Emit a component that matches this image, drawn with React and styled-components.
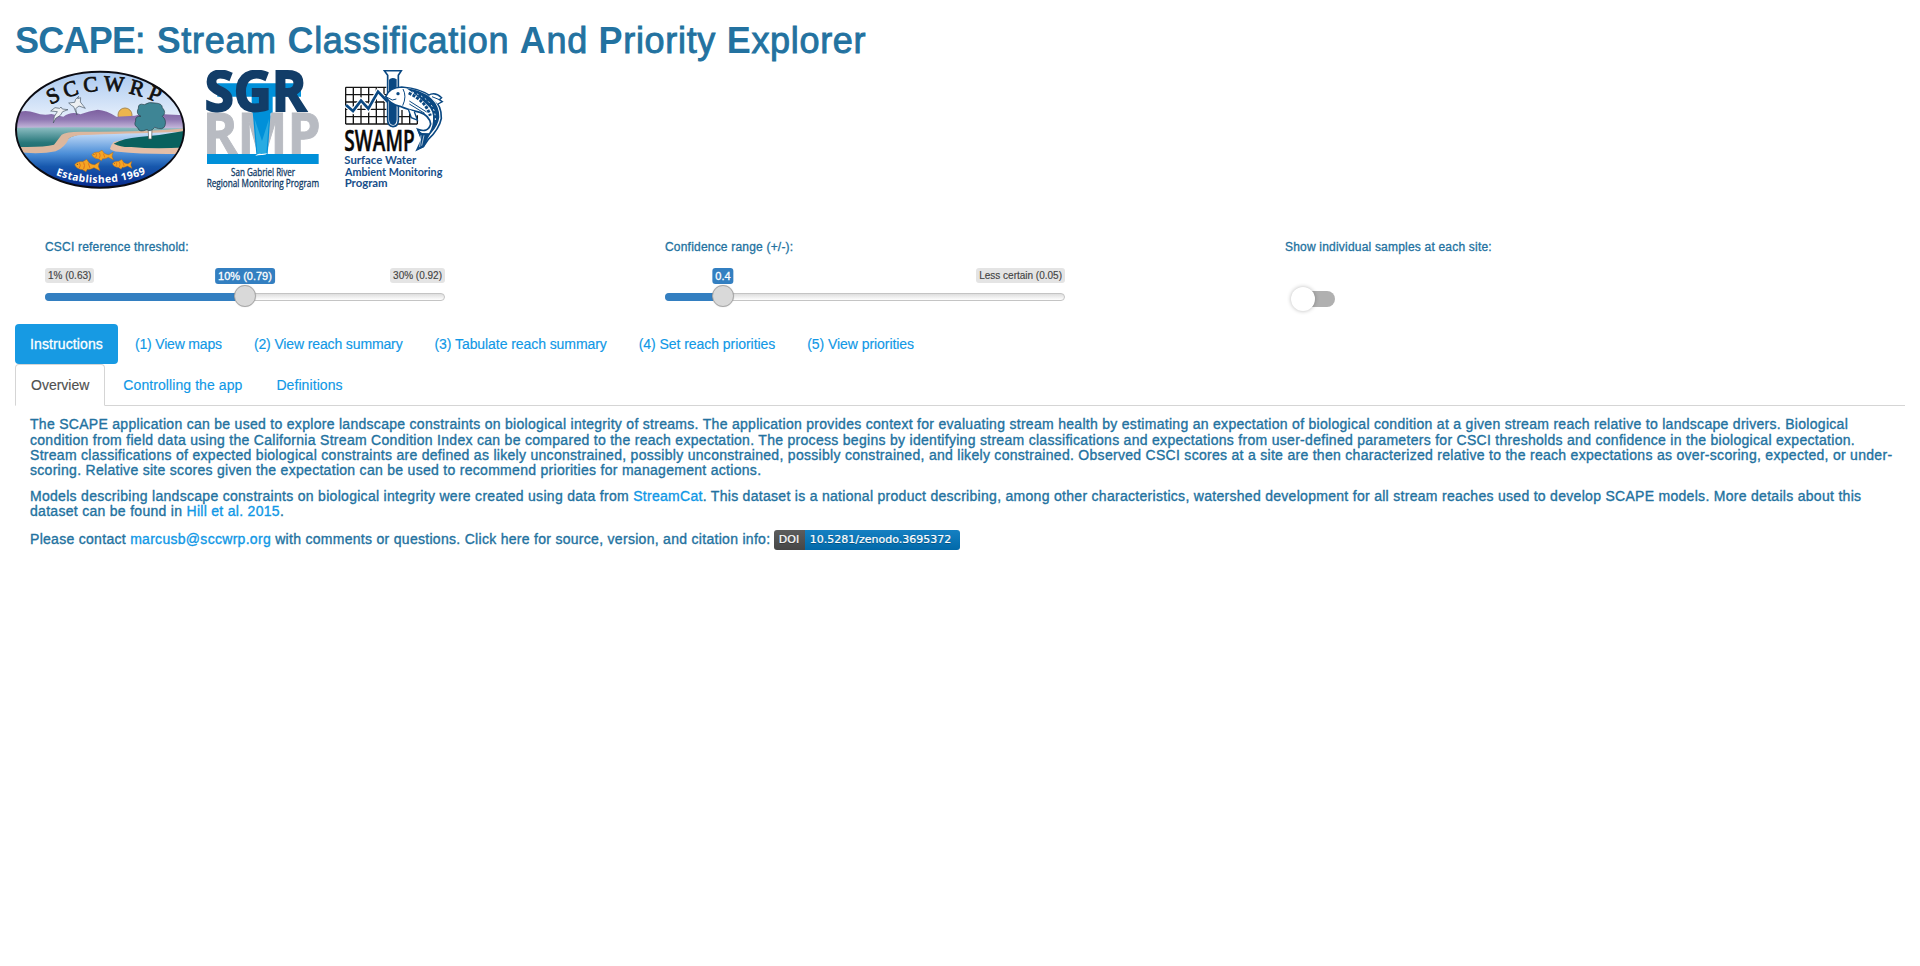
import React from "react";
import styled, { createGlobalStyle } from "styled-components";

const Global = createGlobalStyle`
  *, *::before, *::after { box-sizing: border-box; }
  body {
    margin: 0;
    background: #fff;
    color: #2372a0;
    font: 14px/20px "Liberation Sans", Arial, sans-serif;
  }
`;
const Page = styled.div`padding: 21px 15px 0;`;
const Title = styled.h1`
  margin: 0 0 9px;
  height: 40px;
  font-size: 36px;
  line-height: 40px;
  font-weight: 400;
  letter-spacing: 0.68px;
  white-space: nowrap;
  -webkit-text-stroke: 0.9px #2372a0;
  b { font-weight: 700; -webkit-text-stroke: 0; }
  b:first-child { letter-spacing: -0.75px; }
`;
const Logos = styled.div`
  display: flex;
  height: 120px;
  svg { display: block; flex: none; }
  svg + svg { margin-left: 19px; }
  svg:last-child { margin-left: 23px; }
`;
const Controls = styled.div`
  display: flex;
  padding: 48px 0 0 30px;
  height: 134px;
`;
const Control = styled.div`width: 620px;`;
const ControlLabel = styled.div`
  font-size: 12px;
  line-height: 18px;
  height: 30px;
  letter-spacing: 0.2px;
  -webkit-text-stroke: 0.3px #2372a0;
`;
const Slider = styled.div`position: relative; width: 400px; height: 40px;`;
const Bound = styled.span`
  position: absolute;
  top: 0;
  ${(p) => (p.$end ? "right: 0;" : "left: 0;")}
  padding: 0 3px;
  height: 15px;
  border-radius: 3px;
  background: #e4e4e4;
  color: #444;
  font-size: 10px;
  line-height: 15px;
  white-space: nowrap;
  -webkit-text-stroke: 0.15px #444;
`;
const Value = styled.span`
  position: absolute;
  top: 0;
  transform: translateX(-50%);
  padding: 0 3px;
  height: 16px;
  border-radius: 3px;
  background: #337fc1;
  color: #fff;
  font-size: 11px;
  line-height: 16px;
  white-space: nowrap;
  -webkit-text-stroke: 0.3px #fff;
`;
const Track = styled.div`
  position: absolute;
  top: 25px;
  width: 100%;
  height: 8px;
  border: 1px solid #c4c4c4;
  border-radius: 8px;
  background: linear-gradient(#dedede, #fff);
`;
const Fill = styled.div`
  position: absolute;
  top: 25px;
  height: 8px;
  border-radius: 8px 0 0 8px;
  background: #337fc1;
`;
const Knob = styled.div`
  position: absolute;
  top: 17px;
  width: 22px;
  height: 22px;
  margin-left: -11px;
  border: 1px solid #a8a8a8;
  border-radius: 50%;
  background: #d9d9d9;
  box-shadow: 0 0 1px rgba(0, 0, 0, 0.25);
`;
const Switch = styled.div`
  position: relative;
  width: 40px;
  height: 16px;
  margin: 23px 0 0 10px;
  border-radius: 8px;
  background: #b0b0b0;
  &::after {
    content: "";
    position: absolute;
    left: -4px;
    top: -4px;
    width: 24px;
    height: 24px;
    border-radius: 50%;
    background: #fff;
    box-shadow: 0 0 4px rgba(0, 0, 0, 0.28);
  }
`;
const Pills = styled.nav`display: flex; gap: 2px; height: 40px;`;
const Pill = styled.a`
  padding: 10px 15px;
  border-radius: 4px;
  letter-spacing: ${(p) => p.$tracking}px;
  background: ${(p) => (p.$active ? "#179ae3" : "transparent")};
  color: ${(p) => (p.$active ? "#fff" : "#1098e6")};
  -webkit-text-stroke: ${(p) => (p.$active ? "0.3px #fff" : "0.15px #1098e6")};
`;
const Tabs = styled.nav`
  display: flex;
  gap: 2px;
  height: 42px;
  border-bottom: 1px solid #d5d5d5;
`;
const Tab = styled.a`
  height: 42px;
  padding: 10px 15px;
  border: 1px solid ${(p) => (p.$active ? "#d5d5d5" : "transparent")};
  border-bottom-color: ${(p) => (p.$active ? "#fff" : "transparent")};
  border-radius: 4px 4px 0 0;
  letter-spacing: ${(p) => (p.$active ? 0 : 0.08)}px;
  color: ${(p) => (p.$active ? "#505050" : "#1098e6")};
  -webkit-text-stroke: 0.15px currentColor;
`;
const Panel = styled.div`padding: 11.2px 15px 0;`;
const Paragraph = styled.p`
  margin: 0 0 10px;
  line-height: 15.4px;
  letter-spacing: 0.293px;
  white-space: nowrap;
  -webkit-text-stroke: 0.35px currentColor;
`;
const Link = styled.a`
  color: #1098e6;
  -webkit-text-stroke: 0.35px #1098e6;
`;
const Doi = styled.span`
  display: inline-flex;
  vertical-align: middle;
  width: 186px;
  height: 20px;
  margin-left: -1px;
  border-radius: 3px;
  overflow: hidden;
  color: #fff;
  font: 11px/20px "DejaVu Sans", sans-serif;
  letter-spacing: 0;
  text-shadow: 0 1px 0 rgba(1, 1, 1, 0.3);
  -webkit-text-stroke: 0.2px #fff;
`;
const DoiKey = styled.span`
  width: 31px;
  text-align: center;
  background: linear-gradient(#5d5d5d, #464646);
`;
const DoiValue = styled.span`
  flex: 1;
  padding-right: 3px;
  text-align: center;
  background: linear-gradient(#1580c2, #0169a9);
`;

const Fish = ({ x, y, s }) => (
  <g transform={`translate(${x} ${y}) scale(${s})`} stroke="#a8641c" strokeWidth="1.5">
    <path fill="#f5a524" d="M0 13Q8 2 24 4L36-3 44 8Q54 14 60 13L75 4 71 18 76 31 58 22Q46 29 38 27L34 34 24 28Q6 27 0 13Z" />
    <path fill="none" stroke="#e0701c" strokeWidth="3" d="M14 7Q20 15 14 23M27 6Q32 15 27 26M41 9L46 23" />
    <circle cx="8" cy="12" r="1.6" fill="#333" stroke="none" />
  </g>
);

const SccwrpLogo = () => (
  <svg width="171" height="120" viewBox="15 15 513 360">
    <defs>
      <clipPath id="oval"><ellipse cx="270" cy="194" rx="252" ry="174" /></clipPath>
      <linearGradient id="sky" x2="0" y2="1"><stop stopColor="#a9c8ef" /><stop offset="1" stopColor="#eef4fd" /></linearGradient>
      <linearGradient id="hills" x2="0" y2="1"><stop stopColor="#7c5f9f" /><stop offset=".45" stopColor="#9079b3" /><stop offset="1" stopColor="#dcd2ec" /></linearGradient>
      <linearGradient id="land" x2="0" y2="1"><stop stopColor="#8fbfc4" /><stop offset=".45" stopColor="#27777a" /><stop offset="1" stopColor="#0b5559" /></linearGradient>
      <linearGradient id="water" x2="0" y2="1"><stop stopColor="#cfe3fb" /><stop offset=".38" stopColor="#4d8fd8" /><stop offset=".6" stopColor="#1758ad" /><stop offset="1" stopColor="#05248a" /></linearGradient>
      <path id="nameArc" d="M122 120Q280 36 452 118" />
      <path id="yearArc" d="M137 330Q270 380 408 326" />
    </defs>
    <g clipPath="url(#oval)">
      <path fill="url(#sky)" d="M15 15H528V180H15z" />
      <circle cx="345" cy="150" r="21" fill="#edb54e" stroke="#a88951" strokeWidth="3" />
      <path fill="url(#hills)" d="M15 144Q45 132 75 143Q100 153 124 147L160 155Q184 138 211 148Q238 137 263 134Q290 136 319 155L375 152Q420 135 460 148L528 151V200H15z" />
      <path fill="url(#land)" d="M15 188Q200 184 528 190V290H15z" />
      <path fill="url(#water)" d="M528 198Q330 203 225 206Q175 210 160 237Q145 258 15 260V375H528z" />
      <path fill="#dcb79e" d="M15 245Q95 248 132 239Q143 225 155 209Q169 199 220 200Q380 202 528 190L528 200Q330 206 220 210Q190 211 177 220Q164 249 137 259Q90 269 15 261z" />
      <path fill="#e4bea7" d="M300 251Q303 239 311 231Q340 223 365 225L528 242V266Q410 269 325 260Q307 259 300 251z" />
      <path fill="#08615e" d="M311 236Q341 220 387 216Q457 211 528 197V247Q434 253 364 246Q336 248 311 236z" />
    </g>
    <path fill="#fff" stroke="#555" strokeWidth="2" d="M414 181L416 222H425L426 183z" />
    <path fill="#3e8595" stroke="#263f48" strokeWidth="2" d="M385 130Q384 113 403 119Q417 109 435 114Q457 115 457 128Q471 143 457 154Q470 164 465 182Q459 198 434 187Q420 204 411 193Q388 205 383 188Q370 181 377 168Q374 153 393 154Q376 147 385 130Z" />
    <g fill="#edf0f3" stroke="#465464" strokeWidth="2">
      <path d="M122 138L135 128 149 130 153 126 157 132 174 134 158 140 151 151 137 160 130 174Q130 152 142 140z" />
      <path d="M176 114L194 112 197 103 206 94 203 101 212 98 211 111 226 130 207 123 197 131 201 150 191 125 184 121z" />
    </g>
    <Fish x="194" y="286" s="1" /><Fish x="245" y="258" s=".86" /><Fish x="307" y="286" s=".78" />
    <ellipse cx="270" cy="194" rx="252" ry="174" fill="none" stroke="#0b0b12" strokeWidth="6" />
    <text fill="#111" fontFamily="Liberation Serif, serif" fontSize="65" stroke="#111" strokeWidth="2.4"><textPath href="#nameArc" textLength="334">SCCWRP</textPath></text>
    <text fill="#fff" fontFamily="Noto Sans, sans-serif" fontWeight="700" fontSize="31"><textPath href="#yearArc" textLength="277">Established 1969</textPath></text>
  </svg>
);

const SgrLogo = () => (
  <svg width="115" height="120" viewBox="15 15 345 360" fontFamily="Open Sans, sans-serif">
    <path fill="#0090d9" d="M52 55H303V95H218V145H155V95H52z" />
    <text x="8" y="268" fill="#b8bbc2" stroke="#b8bbc2" strokeWidth="3" fontWeight="700" fontSize="174" textLength="354" lengthAdjust="spacingAndGlyphs">RMP</text>
    <path fill="#0090d9" d="M158 140H212L203 268H169z" />
    <path fill="#29abe2" d="M164 162L186 228 207 162 199 268H172z" />
    <text x="14" y="137" fill="#123d68" stroke="#123d68" strokeWidth="6" fontWeight="700" fontSize="166" textLength="306" lengthAdjust="spacingAndGlyphs">SGR</text>
    <path fill="#0090d9" d="M21 267H356V297H21z" />
    <path fill="#fff" d="M165 272Q175 264 184 267L203 265Q197 271 184 270Q174 270 165 272z" />
    <g fill="#123d68" fontSize="32" stroke="#123d68" strokeWidth="1">
      <text x="93" y="333" textLength="192" lengthAdjust="spacingAndGlyphs">San Gabriel River</text>
      <text x="20" y="365" textLength="337" lengthAdjust="spacingAndGlyphs">Regional Monitoring Program</text>
    </g>
  </svg>
);

const SwampLogo = () => (
  <svg width="102" height="120" viewBox="15 15 306 360">
    <path fill="none" stroke="#151515" strokeWidth="4" d="M23 67H145M23 89H145M23 111H145M23 133H145M23 155H238M23 177H238M23 67V177M46 67V177M69 67V177M92 67V177M115 67V177M138 67V177M192 135V177M215 145V177M238 151V177" />
    <path fill="none" stroke="#fff" strokeWidth="15" d="M24 120L45 138 69 107 91 131 120 80 153 114" />
    <path fill="none" stroke="#0a4882" strokeWidth="8" d="M24 120L45 138 69 107 91 131 120 80 153 114" />
    <path fill="#fff" stroke="#0a4882" strokeWidth="5" d="M139 17H190L181 31V166Q180 184 165 185Q149 183 149 166V31z" />
    <path fill="#0a4882" d="M153 44Q162 35 176 43V164Q175 179 165 180Q154 178 153 165z" />
    <path fill="#fff" stroke="#0a4882" strokeWidth="5" d="M143 95Q153 68 191 66Q249 70 282 96Q312 123 310 160Q304 192 270 224L256 245 237 254 252 222 239 193Q270 205 278 177Q274 151 246 142Q209 134 186 124Q157 118 143 95Z" />
    <path fill="#0a4882" d="M205 70Q250 74 281 101Q305 124 304 157Q301 181 279 205L263 220Q284 192 285 169Q289 137 267 119Q242 94 205 70Z" />
    <path fill="none" stroke="#0a4882" strokeWidth="9" strokeDasharray="9 4" d="M212 84Q262 106 277 152" />
    <path fill="none" stroke="#fff" strokeWidth="3" strokeDasharray="5 9" d="M223 81Q295 107 292 167" />
    <path fill="#0a4882" d="M237 193L252 204 278 205 270 219 258 246 238 254 249 226z" />
    <path fill="#fff" stroke="#0a4882" strokeWidth="4" d="M271 91Q291 79 311 98L304 104 313 110 300 117M211 133L220 158 238 165 229 140" />
    <path fill="none" stroke="#0a4882" strokeWidth="3" d="M145 96L163 105 175 102M195 72Q207 94 194 122M282 95L304 104M214 108L266 141M214 117L260 145" />
    <path fill="none" stroke="#fff" strokeWidth="2" d="M249 211L245 246M258 211L251 242" />
    <circle cx="180" cy="86" r="5" fill="#0a4882" />
    <text x="19" y="258" fontFamily="Open Sans, sans-serif" fontWeight="600" fontSize="86" fill="#080808" stroke="#080808" strokeWidth="1.5" textLength="211" lengthAdjust="spacingAndGlyphs">SWAMP</text>
    <g fill="#174f8b" fontFamily="Lato, sans-serif" fontWeight="700" fontSize="31">
      <text x="19" y="297" textLength="216" lengthAdjust="spacingAndGlyphs">Surface Water</text>
      <text x="21" y="332" textLength="292" lengthAdjust="spacingAndGlyphs">Ambient Monitoring</text>
      <text x="20" y="366" textLength="129" lengthAdjust="spacingAndGlyphs">Program</text>
    </g>
  </svg>
);

const RangeSlider = ({ at, value, min, max }) => (
  <Slider>
    <Track />
    <Fill style={{ width: at }} />
    {min && <Bound>{min}</Bound>}
    <Bound $end>{max}</Bound>
    <Value style={{ left: at }}>{value}</Value>
    <Knob style={{ left: at }} />
  </Slider>
);

const PILLS = [
  ["Instructions", 0.11],
  ["(1) View maps", -0.17],
  ["(2) View reach summary", -0.13],
  ["(3) Tabulate reach summary", -0.07],
  ["(4) Set reach priorities", -0.05],
  ["(5) View priorities", -0.06],
];
const TABS = ["Overview", "Controlling the app", "Definitions"];

export default function App() {
  return (
    <>
      <Global />
      <Page>
        <Title><b>SCAPE</b>: <b>S</b>tream <b>C</b>lassification <b>A</b>nd <b>P</b>riority <b>E</b>xplorer</Title>
        <Logos><SccwrpLogo /><SgrLogo /><SwampLogo /></Logos>
        <Controls>
          <Control>
            <ControlLabel>CSCI reference threshold:</ControlLabel>
            <RangeSlider at={200} min="1% (0.63)" value="10% (0.79)" max="30% (0.92)" />
          </Control>
          <Control>
            <ControlLabel>Confidence range (+/-):</ControlLabel>
            <RangeSlider at={58} value="0.4" max="Less certain (0.05)" />
          </Control>
          <Control>
            <ControlLabel>Show individual samples at each site:</ControlLabel>
            <Switch />
          </Control>
        </Controls>
        <Pills>{PILLS.map(([t, tracking], i) => <Pill key={t} $active={i === 0} $tracking={tracking}>{t}</Pill>)}</Pills>
        <Tabs>{TABS.map((t, i) => <Tab key={t} $active={i === 0}>{t}</Tab>)}</Tabs>
        <Panel>
          <Paragraph>
            The SCAPE application can be used to explore landscape constraints on biological integrity of streams. The application provides context for evaluating stream health by estimating an expectation of biological condition at a given stream reach relative to landscape drivers. Biological<br />
            condition from field data using the California Stream Condition Index can be compared to the reach expectation. The process begins by identifying stream classifications and expectations from user-defined parameters for CSCI thresholds and confidence in the biological expectation.<br />
            Stream classifications of expected biological constraints are defined as likely unconstrained, possibly unconstrained, possibly constrained, and likely constrained. Observed CSCI scores at a site are then characterized relative to the reach expectations as over-scoring, expected, or under-<br />
            scoring. Relative site scores given the expectation can be used to recommend priorities for management actions.
          </Paragraph>
          <Paragraph>
            Models describing landscape constraints on biological integrity were created using data from <Link>StreamCat</Link>. This dataset is a national product describing, among other characteristics, watershed development for all stream reaches used to develop SCAPE models. More details about this<br />
            dataset can be found in <Link>Hill et al. 2015</Link>.
          </Paragraph>
          <Paragraph>
            Please contact <Link>marcusb@sccwrp.org</Link> with comments or questions. Click here for source, version, and citation info: <Doi><DoiKey>DOI</DoiKey><DoiValue>10.5281/zenodo.3695372</DoiValue></Doi>
          </Paragraph>
        </Panel>
      </Page>
    </>
  );
}
